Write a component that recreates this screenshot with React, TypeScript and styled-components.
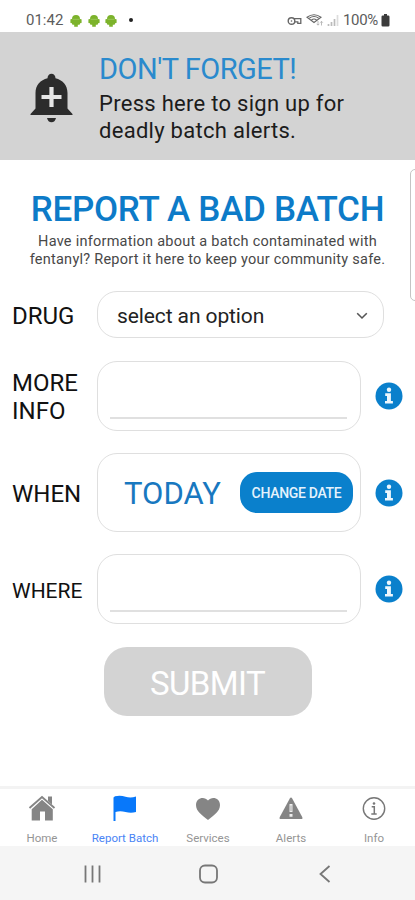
import React from "react";
import styled, { createGlobalStyle } from "styled-components";

const Global = createGlobalStyle`
  * { box-sizing: border-box; }
  body { margin: 0; background: #fff; font-family: Roboto, sans-serif; }
  button { font-family: inherit; border: 0; padding: 0; background: none; }
  svg { display: block; flex: none; }
`;

const Screen = styled.div`
  position: relative;
  width: 415px;
  height: 900px;
  overflow: hidden;
  display: flex;
  flex-direction: column;
  background: #fff;
`;

const StatusBar = styled.header`
  height: 32px;
  padding: 8px 25px 0 26px;
  display: flex;
  justify-content: space-between;
  flex: none;
  color: #5c5c5c;
`;

const StatusGroup = styled.div<{ $gap: number }>`
  display: flex;
  align-items: center;
  height: 24px;
  gap: ${(p) => p.$gap}px;
`;

const StatusText = styled.span<{ $spacing: number; $tail: number }>`
  margin-right: ${(p) => p.$tail}px;
  font-size: 15px;
  line-height: 24px;
  letter-spacing: ${(p) => p.$spacing}px;
`;

const Dot = styled.i`
  width: 4px;
  height: 4px;
  margin-left: 6px;
  border-radius: 50%;
  background: #222;
`;

const Banner = styled.section`
  height: 128px;
  flex: none;
  display: flex;
  padding: 20px 0 0 30px;
  background: #d3d3d3;
`;

const BellBox = styled.div`
  width: 69px;
  padding-top: 21px;
`;

const BannerTitle = styled.h2`
  margin: 0 0 4px;
  font-size: 29px;
  line-height: 34px;
  font-weight: 400;
  letter-spacing: -0.5px;
  color: #2a8acd;
`;

const BannerText = styled.p`
  margin: 0;
  font-size: 22px;
  line-height: 27px;
  letter-spacing: 0.28px;
  color: #1c1c1c;
  white-space: nowrap;
`;

const Intro = styled.section`
  height: 131px;
  flex: none;
  padding-top: 30px;
  text-align: center;
  white-space: nowrap;
`;

const Title = styled.h1`
  margin: 0;
  font-size: 35px;
  line-height: 40px;
  font-weight: 500;
  letter-spacing: -0.3px;
  color: #0d7bc8;
`;

const Description = styled.p`
  margin: 3px 0 0;
  font-size: 14.5px;
  line-height: 17.7px;
  letter-spacing: 0.25px;
  color: #484848;
`;

const Form = styled.main`
  flex: 1;
  display: flex;
  flex-direction: column;
`;

const Row = styled.div<{ $height: number; $gap: number }>`
  display: flex;
  align-items: center;
  flex: none;
  height: ${(p) => p.$height}px;
  margin-bottom: ${(p) => p.$gap}px;
  padding-left: 12px;
`;

const Label = styled.label<{ $small?: boolean; $drop?: number }>`
  width: 85px;
  padding-top: ${(p) => p.$drop ?? 3}px;
  font-size: ${(p) => (p.$small ? 21 : 24)}px;
  line-height: 28px;
  color: #111;
`;

const Field = styled.div<{ $wide?: boolean }>`
  width: ${(p) => (p.$wide ? 287 : 264)}px;
  height: 100%;
  flex: none;
  display: flex;
  align-items: center;
  border: 1.5px solid #dfdfdf;
  border-radius: 20px;
  background: #fff;
`;

const Underline = styled.div`
  align-self: flex-end;
  width: 237px;
  height: 2px;
  margin: 0 auto 11px 12px;
  background: #e0e0e0;
`;

const SelectText = styled.span`
  flex: 1;
  padding: 3px 0 0 19px;
  font-size: 21px;
  line-height: 28px;
  letter-spacing: -0.1px;
  color: #222;
`;

const SelectArrow = styled.span`
  margin: 3px 15px 0 0;
`;

const DateText = styled.span`
  width: 142px;
  padding: 3px 0 0 26px;
  font-size: 31px;
  line-height: 36px;
  color: #1878c0;
`;

const DateButton = styled.button`
  width: 113px;
  height: 41px;
  border-radius: 17px;
  background: #0a80cc;
  color: #e4f2fc;
  font-size: 14px;
  font-weight: 500;
  letter-spacing: -0.3px;
  white-space: nowrap;
`;

const InfoButton = styled.button`
  margin-left: 14px;
`;

const Submit = styled.button`
  width: 208px;
  height: 69px;
  margin: 0 auto;
  padding-top: 3px;
  border-radius: 23px;
  background: #d3d3d3;
  color: #fff;
  font-size: 33px;
  letter-spacing: -0.6px;
`;

const SidePanel = styled.aside`
  position: absolute;
  left: 410px;
  top: 169px;
  width: 12px;
  height: 132px;
  border: 1px solid #c4c4c4;
  border-radius: 5px;
`;

const TabBar = styled.nav`
  display: grid;
  grid-template-columns: repeat(5, 83px);
  height: 60px;
  flex: none;
  border-top: 3px solid #f3f3f3;
`;

const Tab = styled.a<{ $active?: boolean }>`
  display: flex;
  flex-direction: column;
  align-items: center;
  padding: 6px 0 0 1px;
  gap: 8px;
  font-size: 11.5px;
  line-height: 14px;
  white-space: nowrap;
  color: ${(p) => (p.$active ? "#4a84f5" : "#959595")};
`;

const SystemNav = styled.footer`
  height: 54px;
  flex: none;
  display: flex;
  align-items: center;
  padding: 1px 81px 0 83px;
  justify-content: space-between;
  background: #f5f5f5;
`;

const Android = () => (
  <svg width="12" height="13" viewBox="0 0 12 13" fill="#7cb32b">
    <path d="M2 5.200a4 4.200 0 0 1 8 0v4.600q0 .9-.9.900H7.800v2H4.200v-2H2.900Q2 10.700 2 9.800z" />
    <rect x=".4" y="5" width="1.800" height="4.200" rx=".8" />
    <rect x="9.800" y="5" width="1.800" height="4.200" rx=".8" />
    <path d="M2.500 5.300h7" stroke="#a6cf6a" strokeWidth=".7" />
  </svg>
);

const Bell = () => (
  <svg width="43" height="51" viewBox="0 0 43 51">
    <path
      fill="#2c2c2c"
      d="M17.500 5.200a4 4.500 0 0 1 8 0C32.500 7 37.500 12 37.500 20v15.500L42.500 41v1H.5v-1l5-5.500V20C5.500 12 10.500 7 17.500 5.200zM17 45h9q-1 4.200-4.500 4.200T17 45z"
    />
    <path stroke="#e6e6e6" strokeWidth="4.200" d="M21.500 14v20M11.500 24h20" />
  </svg>
);

const StatusIcons = () => (
  <svg width="53" height="14" viewBox="0 0 53 14" fill="none" stroke="#666">
    <circle cx="4.500" cy="8" r="3.300" strokeWidth="1.400" />
    <circle cx="4.500" cy="8" r=".8" fill="#666" stroke="none" />
    <path d="M6.800 5.700h7v4.600h-3V8.800H7.700" strokeWidth="1.300" />
    <path d="M20 4.200q7-5 14 0L27 9.500zM22.500 5q4.500-3 9 0M24.500 7q2.500-2 5 0" strokeWidth="1.100" />
    <path d="M31 8v4m-1.300-1.200L31 12.200l1.300-1.400M34.500 12.500v-4m-1.300 1.200l1.300-1.400 1.300 1.400" strokeWidth=".8" stroke="#aaa" />
    <path d="M41.500 13v-2M44.500 13V9M47.500 13V6" stroke="#bbb" strokeWidth="1.700" />
    <path d="M50.500 13V2" stroke="#ddd" strokeWidth="1.700" />
  </svg>
);

const Battery = () => (
  <svg width="9" height="13" viewBox="0 0 9 13">
    <path fill="#3c3c3c" d="M3 0h3v1.500h1.200q1.300 0 1.300 1.300v8.500q0 1.200-1.300 1.200H1.800Q.5 12.500.5 11.300V2.800q0-1.300 1.300-1.300H3z" />
  </svg>
);

const Chevron = () => (
  <svg width="12" height="8" viewBox="0 0 12 8">
    <path d="M1.200 1.300L6 6l4.800-4.700" fill="none" stroke="#555" strokeWidth="1.600" />
  </svg>
);

const InfoBadge = () => (
  <svg width="28" height="28" viewBox="0 0 28 28">
    <circle cx="14" cy="14" r="13.500" fill="#0a80cc" />
    <circle cx="14" cy="7.800" r="2.200" fill="#eef7fd" />
    <path fill="#eef7fd" d="M10.200 11.300h5.700v7.600h2v2.700H10v-2.700h2v-4.900h-1.800z" />
  </svg>
);

const HomeIcon = () => (
  <svg width="28" height="28" viewBox="0 0 28 28">
    <path d="M1.500 13L14 2 26.500 13" fill="none" stroke="#858585" strokeWidth="1.900" />
    <path fill="#858585" d="M20 1.500h4V9.500l-4-3.500zM14 4.800L24.800 14.200v11.300h-7.800v-9h-5v9H3.700V14.200z" />
  </svg>
);

const FlagIcon = () => (
  <svg width="28" height="28" viewBox="0 0 28 28">
    <path fill="#0878fa" d="M2.500 2.500l1.500-1.300Q9.500 0 14.500 1.700T25 1.500v15.500q-5 1.600-10.500 0T4.500 17v9h-2z" />
  </svg>
);

const HeartIcon = () => (
  <svg width="28" height="28" viewBox="0 0 28 28">
    <path fill="#858585" d="M14 5.500C10.500 1 2 2.500 2 10 2 16.500 8 20 14 25 20 20 26 16.500 26 10 26 2.500 17.500 1 14 5.500z" />
  </svg>
);

const AlertIcon = () => (
  <svg width="28" height="28" viewBox="0 0 28 28">
    <path fill="#858585" d="M12.800 3.500q1.200-1.900 2.400 0l10 18.500q1 2-1 2H3.800q-2 0-1-2z" />
    <path d="M14 9v8M14 19v2.800" stroke="#eee" strokeWidth="3" />
    <path d="M14 10.500v5.500" stroke="#999" strokeWidth=".8" />
  </svg>
);

const InfoIcon = () => (
  <svg width="28" height="28" viewBox="0 0 28 28" fill="none" stroke="#777">
    <circle cx="14" cy="13.500" r="10.700" strokeWidth="1.400" />
    <circle cx="14" cy="8.500" r="1.300" fill="#777" stroke="none" />
    <path d="M11.700 11.800h2.600v7M11.300 19h5.400" strokeWidth="1.500" />
  </svg>
);

const Recents = () => (
  <svg width="18" height="18" viewBox="0 0 18 18">
    <path d="M2.500 .5v17M9.500 .5v17M16.500 .5v17" stroke="#777" strokeWidth="1.800" />
  </svg>
);

const HomeKey = () => (
  <svg width="20" height="20" viewBox="0 0 20 20">
    <rect x="1" y="1.500" width="17" height="17" rx="5" fill="none" stroke="#777" strokeWidth="1.800" />
  </svg>
);

const BackKey = () => (
  <svg width="18" height="18" viewBox="0 0 18 18">
    <path d="M13.500 1L4.500 9l9 8" fill="none" stroke="#777" strokeWidth="1.800" />
  </svg>
);

const tabs = [
  { label: "Home", icon: <HomeIcon /> },
  { label: "Report Batch", icon: <FlagIcon />, active: true },
  { label: "Services", icon: <HeartIcon /> },
  { label: "Alerts", icon: <AlertIcon /> },
  { label: "Info", icon: <InfoIcon /> },
];

const Info = () => (
  <InfoButton aria-label="More information">
    <InfoBadge />
  </InfoButton>
);

export default function App() {
  return (
    <Screen>
      <Global />
      <StatusBar>
        <StatusGroup $gap={5.5}>
          <StatusText $spacing={0} $tail={1.5}>01:42</StatusText>
          <Android />
          <Android />
          <Android />
          <Dot />
        </StatusGroup>
        <StatusGroup $gap={3}>
          <StatusIcons />
          <StatusText $spacing={-0.3} $tail={0}>100%</StatusText>
          <Battery />
        </StatusGroup>
      </StatusBar>
      <Banner>
        <BellBox>
          <Bell />
        </BellBox>
        <div>
          <BannerTitle>DON'T FORGET!</BannerTitle>
          <BannerText>
            Press here to sign up for
            <br />
            deadly batch alerts.
          </BannerText>
        </div>
      </Banner>
      <Intro>
        <Title>REPORT A BAD BATCH</Title>
        <Description>
          Have information about a batch contaminated with
          <br />
          fentanyl? Report it here to keep your community safe.
        </Description>
      </Intro>
      <Form>
        <Row $height={47} $gap={23}>
          <Label>DRUG</Label>
          <Field $wide>
            <SelectText>select an option</SelectText>
            <SelectArrow>
              <Chevron />
            </SelectArrow>
          </Field>
        </Row>
        <Row $height={70} $gap={22}>
          <Label $drop={1}>
            MORE
            <br />
            INFO
          </Label>
          <Field>
            <Underline />
          </Field>
          <Info />
        </Row>
        <Row $height={79} $gap={22}>
          <Label $drop={2}>WHEN</Label>
          <Field>
            <DateText>TODAY</DateText>
            <DateButton>CHANGE DATE</DateButton>
          </Field>
          <Info />
        </Row>
        <Row $height={70} $gap={23}>
          <Label $small>WHERE</Label>
          <Field>
            <Underline />
          </Field>
          <Info />
        </Row>
        <Submit>SUBMIT</Submit>
      </Form>
      <SidePanel />
      <TabBar>
        {tabs.map((t) => (
          <Tab key={t.label} $active={t.active}>
            {t.icon}
            {t.label}
          </Tab>
        ))}
      </TabBar>
      <SystemNav>
        <Recents />
        <HomeKey />
        <BackKey />
      </SystemNav>
    </Screen>
  );
}
